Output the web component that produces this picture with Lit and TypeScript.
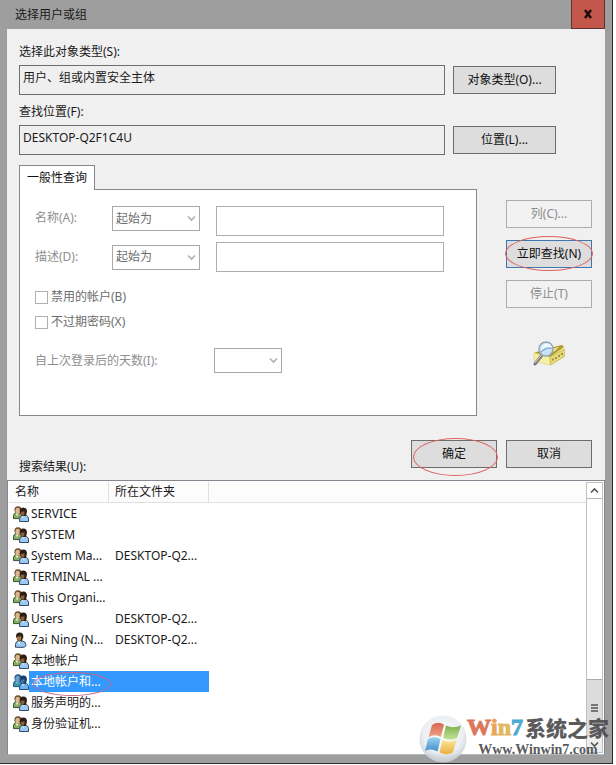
import { LitElement, html, svg, css, nothing } from "lit";
import { customElement, state } from "lit/decorators.js";
import { classMap } from "lit/directives/class-map.js";

interface Principal {
  name: string;
  folder?: string;
  single?: boolean;
}

const PRINCIPALS: Principal[] = [
  { name: "SERVICE" },
  { name: "SYSTEM" },
  { name: "System Ma...", folder: "DESKTOP-Q2..." },
  { name: "TERMINAL ..." },
  { name: "This Organi..." },
  { name: "Users", folder: "DESKTOP-Q2..." },
  { name: "Zai Ning (N...", folder: "DESKTOP-Q2...", single: true },
  { name: "本地帐户" },
  { name: "本地帐户和..." },
  { name: "服务声明的..." },
  { name: "身份验证机..." },
];

const MARKED = 8;

const groupIcon = (selected: boolean) => {
  const c = selected
    ? { hair: "#1f578f", hair2: "#173f6e", face: "#6f9fc4", face2: "#3f74a6", a: "#3d93a6", aLine: "#1c5c80", b: "#6fb2f2", line: "#1c4c80" }
    : { hair: "#6b4a2a", hair2: "#2b1d14", face: "#dcb88e", face2: "#8e5f38", a: "#86ab62", aLine: "#34552a", b: "#9cc8f2", line: "#2d4a6b" };
  return html`<svg class="icon" viewBox="0 0 16 16" aria-hidden="true">
    <path d="M0.5 12.6V9.5Q0.6 7.2 3 6.6H7L9 8V12.6Z" fill=${c.a} stroke=${c.aLine} stroke-width="1" />
    <path d="M2.4 7L4 10.6L5.6 7.4Z" fill=${selected ? "#7db9ee" : "#e4ecd0"} />
    <path d="M1.4 4.4Q1.4 0.3 5 0.3Q8.6 0.3 8.6 4.4V7.2H2.6Z" fill=${c.hair} />
    <ellipse cx="4.7" cy="4.8" rx="2.3" ry="3" fill=${c.face} />
    <path d="M6.6 15.5V12.4Q6.8 10.2 9 9.4H13.4Q15.5 10.4 15.5 12.8V15.5Z" fill=${c.b} stroke=${c.line} stroke-width="1" />
    <path d="M8.6 9.6L10.2 12L12 9.8Z" fill="#e8f3ff" />
    <path d="M6.6 5.4Q6.8 1.4 10.2 1.4Q14.4 1.6 13.9 6L13 9.4Q10.6 11 8.2 9.4Z" fill=${c.hair2} />
    <path d="M7.6 5.6Q9.6 5.8 11.4 5.2Q12 9.4 9.8 9.8Q7.8 9.4 7.6 5.6Z" fill=${c.face2} />
  </svg>`;
};

const userIcon = html`<svg class="icon" viewBox="0 0 16 16" aria-hidden="true">
  <path d="M2.5 15.2V12.5Q2.5 9.6 5.5 8.8L7.2 10L9 8.8Q12.8 9.6 12.8 12.6V14Q12 15.4 9 15.4Z" fill="#9cc8f2" stroke="#2d4a6b" stroke-width="1" />
  <path d="M4.8 9.2L6.4 12.2L8.2 9.2Z" fill="#fff" />
  <path d="M3 4.2Q3 0.4 6.6 0.4Q10.8 0.6 10.3 5.2L9 8.8Q6.6 10 4.6 8.8Z" fill="#2f2419" />
  <path d="M3.7 4.6Q6 4.8 8 4Q9 8.6 6.3 9.1Q4 8.6 3.7 4.6Z" fill="#a87645" />
</svg>`;

const chevron = (d: string, cls: string) =>
  html`<svg class=${cls} viewBox="0 0 9 9" aria-hidden="true">${svg`<path d=${d} fill="none" stroke="currentColor" stroke-width="1.6" />`}</svg>`;
const DOWN = "M1 2.5L4.5 6L8 2.5";
const UP = "M1 6.5L4.5 3L8 6.5";

const searchIcon = html`<svg class="search" viewBox="0 0 32 32" aria-hidden="true">
  <path d="M1 15L9 12L29 7L32 12V18L18 27L1 23Z" fill="#efe794" />
  <path d="M1 15L9 12L29 7L31 9L17 19Z" fill="#b19b2c" />
  <path d="M9 13L26 9L22 13L14 17Z" fill="#efe39b" />
  <path d="M1 15L17 19V27L1 23Z" fill="#f6f0a2" stroke="#d9cc74" stroke-width="0.6" />
  <path d="M17 19L32 11V18L18 27Z" fill="#e6da78" stroke="#b7a84e" stroke-width="0.6" />
  <path d="M20 20.5V22.5M23 19V21M26 17V19M29 15V17" stroke="#75682a" stroke-width="1.2" />
  <path d="M9 17L2 26" stroke="#77777d" stroke-width="3" stroke-linecap="round" />
  <path d="M8.5 17L2 25" stroke="#d4d4da" stroke-width="1" />
  <circle cx="13" cy="11" r="7" fill="#c8e3f5" stroke="#93a3b3" stroke-width="1.4" />
  <path d="M8 13Q12 8 18.5 9Q18 6 14 5.6Q8 6 8 13Z" fill="#eff8ff" />
  <path d="M8 14Q13 9 19 10.5" fill="none" stroke="#83acd0" stroke-width="1.2" />
</svg>`;

const flagLogo = html`<svg class="orb" viewBox="0 0 48 48" aria-hidden="true">
  <defs>
    <radialGradient id="orb" cx="50%" cy="40%" r="60%">
      <stop offset="0" stop-color="#ffffff" />
      <stop offset="0.7" stop-color="#e9edf1" />
      <stop offset="1" stop-color="#c6ccd1" />
    </radialGradient>
    <linearGradient id="red" x2="0" y2="1"><stop stop-color="#d2583c" /><stop offset="1" stop-color="#ef9b78" /></linearGradient>
    <linearGradient id="green" x2="0" y2="1"><stop stop-color="#6fa83a" /><stop offset="1" stop-color="#bfe08a" /></linearGradient>
    <linearGradient id="blue" x2="0" y2="1"><stop stop-color="#8fcdf0" /><stop offset="1" stop-color="#2f82c4" /></linearGradient>
    <linearGradient id="gold" x2="0" y2="1"><stop stop-color="#fbe28a" /><stop offset="1" stop-color="#eaa82c" /></linearGradient>
  </defs>
  <circle cx="24" cy="24" r="23.5" fill="url(#orb)" />
  <path d="M13 10Q19 6 25 9.5L22 22Q16 18.5 9.5 22Z" fill="url(#red)" />
  <path d="M27 10.5Q34 14 42 10.5L38 23Q31 26 24 23Z" fill="url(#green)" />
  <path d="M9 24Q15.5 20.5 21.5 24L18.5 36.5Q12 33 6 36Z" fill="url(#blue)" />
  <path d="M23.5 25Q30.5 28 37.5 25L34 37.5Q27 41 20.5 37.5Z" fill="url(#gold)" />
</svg>`;

@customElement("app-root")
export class AppRoot extends LitElement {
  @state() private selected = 8;

  static styles = css`
    :host {
      display: block;
      padding-right: 3px;
      background: #fff;
      color: #1a1a1a;
      font: 12px/16px "Noto Sans", "Noto Sans CJK SC", sans-serif;
    }
    * { box-sizing: border-box; }
    button, input, select { font: inherit; color: inherit; border-radius: 0; margin: 0; }
    .window {
      position: relative;
      background: #9e9e9e;
      border: solid #2b2b2b;
      border-width: 0 1px 1px 0;
      padding: 0 7px 8px;
    }
    .title {
      display: flex;
      height: 29px;
      padding-left: 8px;
      justify-content: space-between;
      align-items: center;
    }
    h1 { font: inherit; margin: 0; }
    .close {
      width: 34px;
      height: 29px;
      padding: 0;
      background: #c4574c;
      border: 1px solid #5e3431;
      border-top: 0;
    }
    .close svg { display: block; width: 10px; height: 10px; margin: 0 auto; }
    .body { background: #f0f0f0; padding: 15px 13px 0 12px; }
    .field { margin-bottom: 9px; }
    .field label { display: block; margin-bottom: 5px; }
    .line { display: flex; align-items: center; gap: 8px; padding-right: 36px; }
    .line input {
      flex: 1;
      min-width: 0;
      height: 30px;
      padding: 0 3px 6px;
      background: #efefef;
      border: 1px solid #6f6f6f;
    }
    .btn {
      width: 86px;
      height: 28px;
      padding: 0;
      background: #ddd;
      border: 1px solid #6c6c6c;
      color: #111;
    }
    .btn.wide { width: 103px; }
    .btn:disabled { background: #f2f2f2; border-color: #adadad; color: #8c8c8c; }
    .btn.focus { border-color: #3c78ae; }
    .query { display: flex; gap: 29px; padding-top: 1px; }
    .tabs { flex: 1; min-width: 0; }
    .tab {
      position: relative;
      z-index: 1;
      display: block;
      width: 76px;
      height: 25px;
      padding: 0;
      background: #fff;
      border: 1px solid #83888b;
      border-bottom: 0;
      color: #111;
    }
    .panel {
      margin-top: -1px;
      background: #fff;
      border: 1px solid #83888b;
      padding: 16px 32px 42px 15px;
      color: #8f8f8f;
    }
    .cond { display: flex; align-items: center; margin-bottom: 6px; }
    .cond.first { align-items: flex-start; }
    .cond.second { margin-bottom: 16px; }
    .cond label { width: 77px; line-height: 24px; }
    .cond input {
      flex: 1;
      min-width: 0;
      height: 30px;
      margin-left: 16px;
      background: #fff;
      border: 1px solid #abadb3;
    }
    .drop { position: relative; width: 88px; height: 25px; color: #6d6d6d; }
    .drop.small { width: 68px; }
    .drop select {
      appearance: none;
      display: block;
      width: 100%;
      height: 25px;
      padding: 0 3px;
      background: #fff;
      border: 1px solid #a8a8a8;
      opacity: 1;
    }
    .chev { position: absolute; right: 4px; top: 8px; width: 9px; height: 9px; color: #b0b0b0; }
    .check {
      display: flex;
      align-items: center;
      gap: 3px;
      height: 18px;
      margin-bottom: 7px;
      color: #6d6d6d;
    }
    .check input {
      appearance: none;
      width: 13px;
      height: 13px;
      background: #fff;
      border: 1px solid #b0b0b0;
    }
    .days { display: flex; align-items: center; padding-top: 10px; }
    .days label { width: 179px; }
    .side {
      display: flex;
      flex-direction: column;
      gap: 12px;
      padding-top: 35px;
      align-items: center;
    }
    .search { width: 32px; height: 32px; margin-top: 18px; }
    .mark { position: relative; display: block; height: 28px; }
    .ring {
      position: absolute;
      border: 1px solid #e0605f;
      border-radius: 50%;
      pointer-events: none;
    }
    .ring.find { inset: -4px -1px -3px; }
    .ring.ok { inset: -2px -1px -8px 2px; }
    .ring.row { inset: 1px -2px -4px 24px; z-index: 1; border-color: #cc6680; }
    .actions { display: flex; gap: 9px; height: 40px; margin-top: 24px; }
    .actions h2 {
      font: inherit;
      flex: 1;
      align-self: flex-end;
      margin: 0 0 5px;
    }
    .list {
      display: flex;
      background: #fff;
      border: 1px solid #828790;
      border-bottom-color: #b5babd;
      padding: 1px;
    }
    .grid { flex: 1; min-width: 0; padding-bottom: 19px; }
    table { width: 100%; border-collapse: separate; border-spacing: 0; table-layout: fixed; }
    .col { width: 100px; }
    th {
      height: 21px;
      padding: 0 6px;
      background: #fcfcfd;
      border: solid #dedfe1;
      border-width: 0 1px 1px 0;
      text-align: left;
      font-weight: normal;
    }
    th:last-child { border-right: 0; }
    td { height: 21px; padding: 0; white-space: nowrap; line-height: 21px; }
    .name { position: relative; display: flex; align-items: center; padding-left: 4px; }
    .text { flex: 1; padding-left: 2px; }
    .folder { display: block; height: 21px; padding-left: 6px; }
    .selected .text, .selected .folder { background: #3399ff; color: #fff; }
    .icon { width: 16px; height: 16px; flex: none; }
    .scroll {
      display: flex;
      flex-direction: column;
      width: 17px;
      border: 1px solid #c0c0c0;
      background: #fff;
      color: #555;
    }
    .scroll button {
      height: 16px;
      padding: 0;
      background: #fff;
      border: 0;
      border-bottom: 1px solid #b5b5b5;
    }
    .scroll button svg { display: block; width: 9px; height: 9px; margin: 0 auto; }
    .track { flex: 1; display: flex; align-items: flex-end; }
    .thumb {
      display: grid;
      place-items: center;
      width: 100%;
      height: 57px;
      background: #dcdcdc;
      border-top: 1px solid #aaa;
    }
    .thumb svg { width: 7px; height: 8px; }
    .scroll button.down { background: #eee; border: 0; }
    .watermark {
      position: absolute;
      right: 3px;
      bottom: 0;
      display: flex;
      align-items: flex-start;
      pointer-events: none;
    }
    .orb { width: 48px; height: 48px; opacity: 0.9; }
    .brand { display: flex; flex-direction: column; align-items: center; color: #4a4a4c; opacity: 0.9; }
    .big {
      display: flex;
      font: bold 24px/24px "Liberation Serif", serif;
      white-space: nowrap;
    }
    .cjk { font: 900 21px/24px "Noto Sans CJK SC", sans-serif; margin-left: 2px; }
    .w { color: #d9694a; -webkit-text-stroke: 1px #d9694a; }
    .i { color: #e89a48; -webkit-text-stroke: 1px #e89a48; }
    .n { color: #e0b050; -webkit-text-stroke: 1px #e0b050; }
    .seven { color: #3c9fd0; -webkit-text-stroke: 1px #3c9fd0; }
    .site { font: bold 14px/14px "Liberation Serif", serif; margin-top: 4px; }
  `;

  private drop(id: string, label: string, value = "", small = false) {
    return html`<div class=${classMap({ drop: true, small })}>
      <select id=${id} aria-label=${label} disabled><option>${value}</option></select>
      ${chevron(DOWN, "chev")}
    </div>`;
  }

  render() {
    return html`<main class="window">
      <header class="title">
        <h1>选择用户或组</h1>
        <button class="close" aria-label="关闭">
          <svg viewBox="0 0 10 10"><path d="M2 1L8 9M8 1L2 9" stroke="#1a0c0b" stroke-width="2.4" /></svg>
        </button>
      </header>
      <div class="body">
        <div class="field">
          <label for="types">选择此对象类型(S):</label>
          <div class="line">
            <input id="types" readonly .value=${"用户、组或内置安全主体"} />
            <button class="btn wide">对象类型(O)...</button>
          </div>
        </div>
        <div class="field">
          <label for="place">查找位置(F):</label>
          <div class="line">
            <input id="place" readonly .value=${"DESKTOP-Q2F1C4U"} />
            <button class="btn wide">位置(L)...</button>
          </div>
        </div>
        <div class="query">
          <div class="tabs">
            <button class="tab" role="tab" aria-selected="true">一般性查询</button>
            <div class="panel" role="tabpanel">
              <div class="cond first">
                <label for="name">名称(A):</label>
                ${this.drop("name-op", "名称", "起始为")}
                <input id="name" disabled />
              </div>
              <div class="cond second">
                <label for="desc">描述(D):</label>
                ${this.drop("desc-op", "描述", "起始为")}
                <input id="desc" disabled />
              </div>
              <label class="check"><input type="checkbox" disabled />禁用的帐户(B)</label>
              <label class="check"><input type="checkbox" disabled />不过期密码(X)</label>
              <div class="days">
                <label for="days">自上次登录后的天数(I):</label>
                ${this.drop("days", "天数", "", true)}
              </div>
            </div>
          </div>
          <div class="side">
            <button class="btn" disabled>列(C)...</button>
            <span class="mark"><button class="btn focus">立即查找(N)</button><span class="ring find"></span></span>
            <button class="btn" disabled>停止(T)</button>
            ${searchIcon}
          </div>
        </div>
        <div class="actions">
          <h2>搜索结果(U):</h2>
          <span class="mark"><button class="btn">确定</button><span class="ring ok"></span></span>
          <button class="btn">取消</button>
        </div>
      </div>
      <div class="list">
        <div class="grid">
          <table>
            <colgroup><col class="col" /><col class="col" /><col /></colgroup>
            <thead><tr><th>名称</th><th>所在文件夹</th><th></th></tr></thead>
            <tbody>
              ${PRINCIPALS.map((p, i) => html`<tr
                class=${classMap({ selected: i === this.selected })}
                @click=${() => (this.selected = i)}
              >
                <td><div class="name">
                  ${p.single ? userIcon : groupIcon(i === this.selected)}<span class="text">${p.name}</span>
                  ${i === MARKED ? html`<span class="ring row"></span>` : nothing}
                </div></td>
                <td><span class="folder">${p.folder ?? nothing}</span></td>
                <td></td>
              </tr>`)}
            </tbody>
          </table>
        </div>
        <div class="scroll">
          <button aria-label="向上">${chevron(UP, "")}</button>
          <div class="track"><div class="thumb">
            <svg viewBox="0 0 7 8"><path d="M0 1H7M0 4H7M0 7H7" stroke="#555" stroke-width="1.6" /></svg>
          </div></div>
          <button class="down" aria-label="向下">${chevron(DOWN, "")}</button>
        </div>
      </div>
      <div class="watermark">
        ${flagLogo}
        <div class="brand">
          <div class="big"><span class="w">W</span><span class="i">i</span><span class="n">n</span><span class="seven">7</span><span class="cjk">系统之家</span></div>
          <div class="site">Www.Winwin7.com</div>
        </div>
      </div>
    </main>`;
  }
}
